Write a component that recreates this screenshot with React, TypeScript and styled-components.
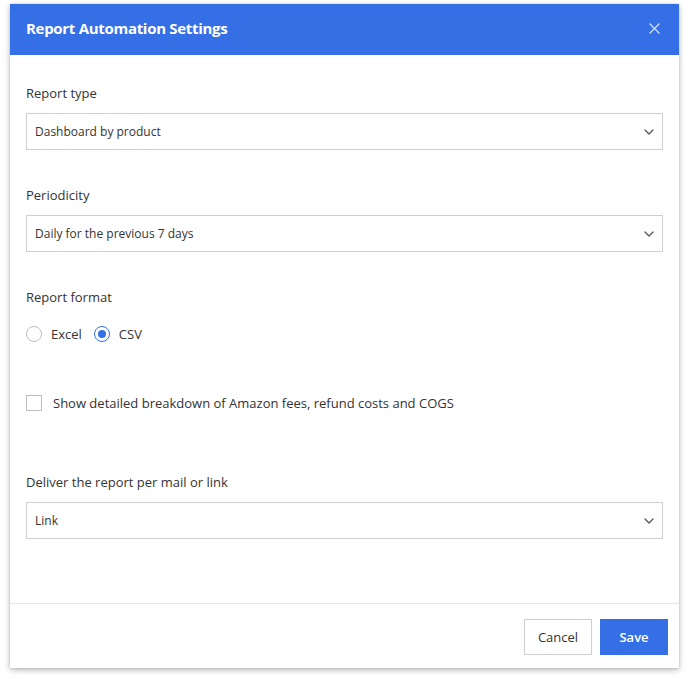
import styled, { createGlobalStyle } from 'styled-components';
import { useState } from 'react';

const GlobalStyle = createGlobalStyle`
  html, body {
    margin: 0;
    padding: 0;
    background: #ffffff;
    font-family: "Open Sans", "Liberation Sans", sans-serif;
    color: #333333;
  }
  * { box-sizing: border-box; }
`;

const Chevron = () => (
  <svg width="10" height="6" viewBox="0 0 10 6" fill="none">
    <path d="M1 1l4 4 4-4" stroke="#555" strokeWidth="1.3" strokeLinecap="round" strokeLinejoin="round" />
  </svg>
);

const CloseIcon = () => (
  <svg width="11" height="11" viewBox="0 0 11 11" fill="none">
    <path d="M1 1l9 9M10 1l-9 9" stroke="#cfdcf8" strokeWidth="1.4" strokeLinecap="round" />
  </svg>
);

const Select = ({ value }: { value: string }) => (
  <SelectBox>
    <span>{value}</span>
    <Chevron />
  </SelectBox>
);

const App = () => {
  const [format, setFormat] = useState('csv');
  const [detailed, setDetailed] = useState(false);

  return (
    <Page>
      <GlobalStyle />
      <Modal>
        <Header>
          <Title>Report Automation Settings</Title>
          <Close>
            <CloseIcon />
          </Close>
        </Header>
        <Body>
          <Field>
            <Label>Report type</Label>
            <Select value="Dashboard by product" />
          </Field>
          <Field>
            <Label>Periodicity</Label>
            <Select value="Daily for the previous 7 days" />
          </Field>
          <Field>
            <Label>Report format</Label>
            <RadioRow>
              <Option onClick={() => setFormat('excel')}>
                <Radio $checked={format === 'excel'} />
                Excel
              </Option>
              <Option onClick={() => setFormat('csv')}>
                <Radio $checked={format === 'csv'} />
                CSV
              </Option>
            </RadioRow>
          </Field>
          <CheckRow onClick={() => setDetailed(!detailed)}>
            <Checkbox $checked={detailed} />
            Show detailed breakdown of Amazon fees, refund costs and COGS
          </CheckRow>
          <Field>
            <Label>Deliver the report per mail or link</Label>
            <Select value="Link" />
          </Field>
        </Body>
        <Footer>
          <Button>Cancel</Button>
          <Button $primary>Save</Button>
        </Footer>
      </Modal>
    </Page>
  );
};

export default App;

const Page = styled.div`
  width: 688px;
  height: 679px;
  padding: 4px 9px 0 10px;
`;

const Modal = styled.div`
  width: 669px;
  height: 664px;
  background: #ffffff;
  display: flex;
  flex-direction: column;
  box-shadow: 0 2px 6px rgba(0, 0, 0, 0.28), 0 0 2px rgba(0, 0, 0, 0.12);
`;

const Header = styled.div`
  height: 51px;
  background: #356fe5;
  display: flex;
  align-items: center;
  justify-content: space-between;
  padding: 0 19px 3px 16px;
`;

const Title = styled.div`
  color: #ffffff;
  font-size: 15px;
  font-weight: 700;
  letter-spacing: -0.3px;
`;

const Close = styled.div`
  display: flex;
  align-items: center;
  cursor: pointer;
`;

const Body = styled.div`
  flex: 1;
  padding: 28px 16px 0;
  display: flex;
  flex-direction: column;
`;

const Field = styled.div`
  display: flex;
  flex-direction: column;
  margin-bottom: 35px;
`;

const Label = styled.div`
  font-size: 13px;
  line-height: 20px;
  color: #333333;
  margin-bottom: 10px;
`;

const SelectBox = styled.div`
  height: 37px;
  border: 1px solid #cfcfcf;
  display: flex;
  align-items: center;
  justify-content: space-between;
  padding: 0 8px 0 8px;
  font-size: 12px;
  color: #333333;
  cursor: pointer;
`;

const RadioRow = styled.div`
  display: flex;
  align-items: center;
  gap: 12px;
  height: 20px;
  margin-top: 7px;
`;

const Option = styled.label`
  display: flex;
  align-items: center;
  gap: 9px;
  font-size: 13px;
  cursor: pointer;
`;

const Radio = styled.span<{ $checked: boolean }>`
  width: 16px;
  height: 16px;
  border-radius: 50%;
  border: 1px solid ${(p) => (p.$checked ? '#356fe5' : '#bdbdbd')};
  display: flex;
  align-items: center;
  justify-content: center;

  &::after {
    content: '';
    width: 8px;
    height: 8px;
    border-radius: 50%;
    background: #356fe5;
    display: ${(p) => (p.$checked ? 'block' : 'none')};
  }
`;

const CheckRow = styled.label`
  display: flex;
  align-items: center;
  gap: 11px;
  font-size: 13px;
  height: 20px;
  margin-top: 14px;
  margin-bottom: 59px;
  cursor: pointer;
`;

const Checkbox = styled.span<{ $checked: boolean }>`
  width: 16px;
  height: 16px;
  border: 1px solid #bdbdbd;
  background: ${(p) => (p.$checked ? '#356fe5' : '#ffffff')};
`;

const Footer = styled.div`
  border-top: 1px solid #e6e6e6;
  padding: 15px 11px 13px;
  display: flex;
  justify-content: flex-end;
  gap: 8px;
`;

const Button = styled.button<{ $primary?: boolean }>`
  width: 68px;
  height: 36px;
  font-family: inherit;
  font-size: 13px;
  font-weight: ${(p) => (p.$primary ? 600 : 400)};
  color: ${(p) => (p.$primary ? '#ffffff' : '#333333')};
  background: ${(p) => (p.$primary ? '#356fe5' : '#ffffff')};
  border: 1px solid ${(p) => (p.$primary ? '#356fe5' : '#cfcfcf')};
  cursor: pointer;
`;
